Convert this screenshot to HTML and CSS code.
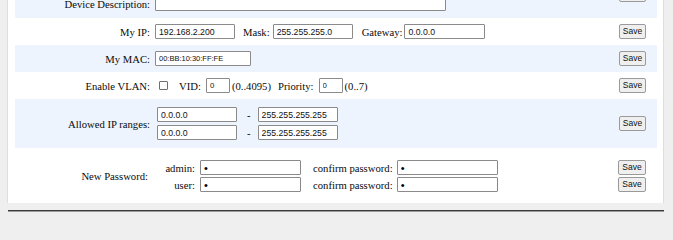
FILE: index.html
```html
<!DOCTYPE html>
<html>
<head>
<meta charset="utf-8">
<link rel="stylesheet" href="styles.css">
</head>
<body>
<div class="panel">
  <div class="row row-top alt">
    <button class="save save-span">Save</button>
    <div class="label">Device Name:</div>
    <div class="field"><input class="in in-wide" type="text" value=""></div>
    <div class="label">Device Description:</div>
    <div class="field"><input class="in in-wide" type="text" value=""></div>
  </div>

  <div class="row">
    <div class="label">My IP:</div>
    <div class="field">
      <input class="in in-ip" type="text" value="192.168.2.200">
      <span class="txt gap-mask">Mask:</span>
      <input class="in in-ip gap-2" type="text" value="255.255.255.0">
      <span class="txt gap-gw">Gateway:</span>
      <input class="in in-ip in-gw gap-1" type="text" value="0.0.0.0">
    </div>
    <button class="save">Save</button>
  </div>

  <div class="row alt">
    <div class="label">My MAC:</div>
    <div class="field">
      <input class="in in-mac" type="text" value="00:BB:10:30:FF:FE">
    </div>
    <button class="save">Save</button>
  </div>

  <div class="row">
    <div class="label">Enable VLAN:</div>
    <div class="field">
      <input class="chk" type="checkbox">
      <span class="txt gap-vid">VID:</span>
      <input class="in in-num gap-vidin" type="text" value="0">
      <span class="txt gap-1">(0..4095)</span>
      <span class="txt gap-pri">Priority:</span>
      <input class="in in-num gap-prin" type="text" value="0">
      <span class="txt gap-1">(0..7)</span>
    </div>
    <button class="save">Save</button>
  </div>

  <div class="row row-range alt">
    <div class="label">Allowed IP ranges:</div>
    <div class="field ranges">
      <div class="range">
        <input class="in in-ip" type="text" value="0.0.0.0">
        <span class="txt dash">-</span>
        <input class="in in-ip" type="text" value="255.255.255.255">
      </div>
      <div class="range">
        <input class="in in-ip" type="text" value="0.0.0.0">
        <span class="txt dash">-</span>
        <input class="in in-ip" type="text" value="255.255.255.255">
      </div>
    </div>
    <button class="save">Save</button>
  </div>

  <div class="row row-pw">
    <div class="label label-pw">New Password:</div>
    <div class="field pwline">
      <span class="txt sublabel">admin:</span>
      <input class="in in-pw" type="password" value="a">
      <span class="txt gap-conf">confirm password:</span>
      <input class="in in-pw gap-confin" type="password" value="a">
    </div>
    <button class="save save-pw">Save</button>
    <div class="field pwline">
      <span class="txt sublabel">user:</span>
      <input class="in in-pw" type="password" value="a">
      <span class="txt gap-conf">confirm password:</span>
      <input class="in in-pw gap-confin" type="password" value="a">
    </div>
    <button class="save save-pw">Save</button>
  </div>
</div>
<div class="footer-line"></div>
</body>
</html>
```
FILE: styles.css
```css
html, body {
  margin: 0;
  padding: 0;
}
html {
  height: 216px;
  overflow: hidden;
  background: #efefef;
}
body {
  height: 216px;
  overflow: hidden;
  background: #efefef;
  font-family: "Liberation Serif", "Times New Roman", serif;
  font-size: 10.67px;
  color: #0a0a0a;
}
.panel {
  margin-top: -29px;
  margin-left: 7px;
  width: 657px;
  box-sizing: border-box;
  background: #fff;
  border-left: 1px solid #dedede;
  border-right: 1px solid #dedede;
  padding: 0 6px 0 7px;
}
.row {
  display: grid;
  grid-template-columns: 135px 1fr 27px;
  column-gap: 5px;
  align-items: center;
  padding: 6px 11px 6px 0;
}
.alt {
  background: #edf4fd;
}
.row-top {
  padding-top: 7px;
  padding-bottom: 7px;
  row-gap: 3px;
}
.row-top .save-span {
  grid-column: 3;
  grid-row: 1 / 3;
}
.row-range {
  padding-top: 8px;
  padding-bottom: 8px;
}
.row-pw {
  padding-top: 12px;
  padding-bottom: 11px;
  row-gap: 2px;
}
.label {
  text-align: right;
  white-space: nowrap;
}
.label-pw {
  grid-column: 1;
  grid-row: 1 / 3;
  padding-right: 2px;
}
.field {
  display: flex;
  align-items: center;
  white-space: nowrap;
}
.txt {
  white-space: pre;
}
.in {
  box-sizing: border-box;
  height: 15px;
  border: 1px solid #8a8a8a;
  border-radius: 1px;
  padding: 0 2px 0 3px;
  margin: 0;
  background: #fff;
  font-family: "Liberation Sans", Arial, sans-serif;
  font-size: 8.7px;
  color: #111;
  outline: none;
}
.in-wide { width: 291px; }
.in-ip { width: 80px; }
.in-gw { width: 81px; }
.in-mac { width: 96px; font-size: 7.5px; }
.in-num { width: 24px; font-size: 7.8px; }
.in-pw {
  width: 101px;
  font-size: 11px;
  color: #000;
}

.gap-mask { margin-left: 8px; }
.gap-2 { margin-left: 3px; }
.gap-gw { margin-left: 9px; }
.gap-1 { margin-left: 2px; }
.gap-vid { margin-left: 11px; }
.gap-vidin { margin-left: 5px; }
.gap-pri { margin-left: 7px; }
.gap-prin { margin-left: 5px; }

.chk {
  -webkit-appearance: none;
  appearance: none;
  box-sizing: border-box;
  width: 9px;
  height: 9px;
  margin: 0 0 0 4px;
  border: 1px solid #6f6f6f;
  border-radius: 1px;
  background: #fff;
}

.ranges {
  flex-direction: column;
  align-items: flex-start;
  gap: 3px;
  padding-left: 2px;
}
.range {
  display: flex;
  align-items: center;
}
.dash {
  margin: 0 7px 0 10px;
}

.pwline {
  grid-column: 2;
}
.sublabel {
  width: 40px;
  text-align: right;
}
.pwline .in-pw:first-of-type {
  margin-left: 5px;
}
.gap-conf { margin-left: 12px; }
.gap-confin { margin-left: 4px; }

.save {
  box-sizing: border-box;
  width: 27px;
  height: 15px;
  padding: 0;
  margin: 0;
  border: 1px solid #9a9a9a;
  border-radius: 2px;
  background: #efefef;
  font-family: "Liberation Sans", Arial, sans-serif;
  font-size: 8.5px;
  color: #111;
  line-height: 13px;
}
.save-pw {
  position: relative;
  left: -1px;
  width: 28px;
}
.footer-line {
  margin-top: 7px;
  margin-left: 8px;
  width: 656px;
  height: 1px;
  background: #3a3a3a;
  border-bottom: 1px solid #9a9a9a;
}
```
